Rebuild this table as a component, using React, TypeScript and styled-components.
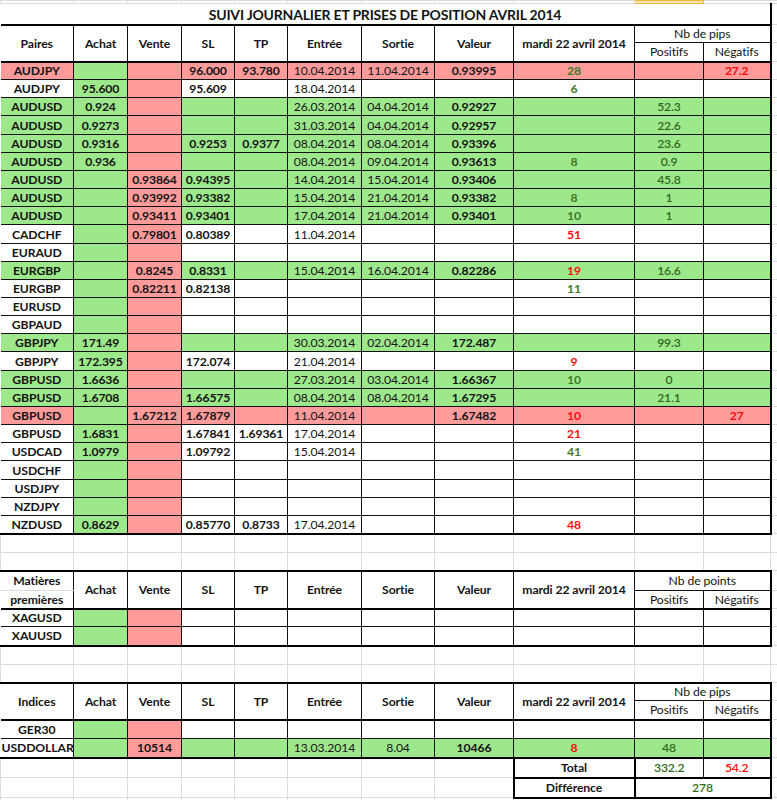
import * as React from 'react';
import styled, { createGlobalStyle } from 'styled-components';

const GlobalStyle = createGlobalStyle`
  html, body {
    margin: 0;
    padding: 0;
    background: #fff;
    overflow: hidden;
  }
`;

// widths of the spreadsheet columns, the last one is the empty column cut by the window
const COLS = [73, 54, 54, 53, 53, 74, 73, 79, 121, 69, 67, 7];

type Fill = 'g' | 'r' | 'w' | 'sel';
type Ink = 'k' | 'g' | 'pos' | 'r';
type Edge = 'none' | 'grid' | 'line' | 'thick';

const FILLS: Record<Fill, string> = {
    g: '#9ee88c',
    r: '#ff9b9b',
    w: '#ffffff',
    sel: '#fde6ad',
};

const INKS: Record<Ink, string> = {
    k: '#141414',
    g: '#437a27',
    pos: '#2f6a20',
    r: '#ff0d0d',
};

const edge = (e: Edge) => {
    if (e === 'none') return 'none';
    if (e === 'grid') return '1px solid #dcdcdc';
    if (e === 'line') return '1px solid #111';
    return '2px solid #000';
};

const Sheet = styled.table`
    border-collapse: collapse;
    table-layout: fixed;
    width: 777px;
    font-family: Lato, 'Liberation Sans', sans-serif;
    font-size: 12.2px;
    letter-spacing: -0.1px;
    color: #141414;
`;

const Row = styled.tr<{ $h: number }>`
    height: ${p => p.$h}px;
`;

const Cell = styled.td<{
    $fill?: Fill;
    $ink?: Ink;
    $weight?: number;
    $t?: Edge;
    $r?: Edge;
    $b?: Edge;
    $l?: Edge;
}>`
    padding: 0 1px;
    line-height: 15px;
    text-align: center;
    vertical-align: middle;
    white-space: nowrap;
    overflow: visible;
    background: ${p => FILLS[p.$fill || 'w']};
    color: ${p => INKS[p.$ink || 'k']};
    font-weight: ${p => p.$weight || 400};
    border-top: ${p => edge(p.$t || 'line')};
    border-right: ${p => edge(p.$r || 'line')};
    border-bottom: ${p => edge(p.$b || 'line')};
    border-left: ${p => edge(p.$l || 'line')};
`;

const Title = styled(Cell)`
    font-size: 14px;
    letter-spacing: -0.2px;
    padding-top: 1px;
`;

const Blank = styled.td<{ $fill?: Fill }>`
    padding: 0;
    background: ${p => FILLS[p.$fill || 'w']};
    border: 1px solid ${p => (p.$fill === 'sel' ? '#f1b53c' : '#dcdcdc')};
`;

interface Trade {
    fill: Fill;
    pair: string;
    achat?: string;
    vente?: string;
    sl?: string;
    tp?: string;
    entree?: string;
    sortie?: string;
    valeur?: string;
    jour?: string;
    tone?: 'g' | 'r';
    pos?: string;
    neg?: string;
    plainLabel?: boolean;
}

const pairs: Trade[] = [
    { fill: 'r', pair: 'AUDJPY', sl: '96.000', tp: '93.780', entree: '10.04.2014', sortie: '11.04.2014', valeur: '0.93995', jour: '28', tone: 'g', neg: '27.2' },
    { fill: 'w', pair: 'AUDJPY', achat: '95.600', sl: '95.609', entree: '18.04.2014', jour: '6', tone: 'g' },
    { fill: 'g', pair: 'AUDUSD', achat: '0.924', entree: '26.03.2014', sortie: '04.04.2014', valeur: '0.92927', pos: '52.3' },
    { fill: 'g', pair: 'AUDUSD', achat: '0.9273', entree: '31.03.2014', sortie: '04.04.2014', valeur: '0.92957', pos: '22.6' },
    { fill: 'g', pair: 'AUDUSD', achat: '0.9316', sl: '0.9253', tp: '0.9377', entree: '08.04.2014', sortie: '08.04.2014', valeur: '0.93396', pos: '23.6' },
    { fill: 'g', pair: 'AUDUSD', achat: '0.936', entree: '08.04.2014', sortie: '09.04.2014', valeur: '0.93613', jour: '8', tone: 'g', pos: '0.9' },
    { fill: 'g', pair: 'AUDUSD', vente: '0.93864', sl: '0.94395', entree: '14.04.2014', sortie: '15.04.2014', valeur: '0.93406', pos: '45.8' },
    { fill: 'g', pair: 'AUDUSD', vente: '0.93992', sl: '0.93382', entree: '15.04.2014', sortie: '21.04.2014', valeur: '0.93382', jour: '8', tone: 'g', pos: '1' },
    { fill: 'g', pair: 'AUDUSD', vente: '0.93411', sl: '0.93401', entree: '17.04.2014', sortie: '21.04.2014', valeur: '0.93401', jour: '10', tone: 'g', pos: '1' },
    { fill: 'w', pair: 'CADCHF', vente: '0.79801', sl: '0.80389', entree: '11.04.2014', jour: '51', tone: 'r' },
    { fill: 'w', pair: 'EURAUD' },
    { fill: 'g', pair: 'EURGBP', vente: '0.8245', sl: '0.8331', entree: '15.04.2014', sortie: '16.04.2014', valeur: '0.82286', jour: '19', tone: 'r', pos: '16.6' },
    { fill: 'w', pair: 'EURGBP', vente: '0.82211', sl: '0.82138', jour: '11', tone: 'g' },
    { fill: 'w', pair: 'EURUSD' },
    { fill: 'w', pair: 'GBPAUD' },
    { fill: 'g', pair: 'GBPJPY', achat: '171.49', entree: '30.03.2014', sortie: '02.04.2014', valeur: '172.487', pos: '99.3' },
    { fill: 'w', pair: 'GBPJPY', achat: '172.395', sl: '172.074', entree: '21.04.2014', jour: '9', tone: 'r' },
    { fill: 'g', pair: 'GBPUSD', achat: '1.6636', entree: '27.03.2014', sortie: '03.04.2014', valeur: '1.66367', jour: '10', tone: 'g', pos: '0' },
    { fill: 'g', pair: 'GBPUSD', achat: '1.6708', sl: '1.66575', entree: '08.04.2014', sortie: '08.04.2014', valeur: '1.67295', pos: '21.1' },
    { fill: 'r', pair: 'GBPUSD', vente: '1.67212', sl: '1.67879', entree: '11.04.2014', valeur: '1.67482', jour: '10', tone: 'r', neg: '27' },
    { fill: 'w', pair: 'GBPUSD', achat: '1.6831', sl: '1.67841', tp: '1.69361', entree: '17.04.2014', jour: '21', tone: 'r' },
    { fill: 'w', pair: 'USDCAD', achat: '1.0979', sl: '1.09792', entree: '15.04.2014', jour: '41', tone: 'g' },
    { fill: 'w', pair: 'USDCHF' },
    { fill: 'w', pair: 'USDJPY' },
    { fill: 'w', pair: 'NZDJPY' },
    { fill: 'w', pair: 'NZDUSD', achat: '0.8629', sl: '0.85770', tp: '0.8733', entree: '17.04.2014', jour: '48', tone: 'r' },
];

const metals: Trade[] = [
    { fill: 'w', pair: 'XAGUSD' },
    { fill: 'w', pair: 'XAUUSD' },
];

const indices: Trade[] = [
    { fill: 'w', pair: 'GER30' },
    { fill: 'g', pair: 'USDDOLLAR', vente: '10514', entree: '13.03.2014', sortie: '8.04', valeur: '10466', jour: '8', tone: 'r', pos: '48', plainLabel: true },
];

const DAY = 'mardi 22 avril 2014';

const BlankRow = ({ h, sel }: { h: number; sel?: boolean }) => (
    <Row $h={h}>
        {COLS.map((_, i) => (
            <Blank key={i} $fill={sel && i === 9 ? 'sel' : 'w'} />
        ))}
    </Row>
);

const HeadRows = ({ label, label2, unit, hs }: { label: string; label2?: string; unit: string; hs: [number, number] }) => {
    const heads = ['Achat', 'Vente', 'SL', 'TP', 'Entrée', 'Sortie', 'Valeur', DAY];
    return (
        <>
            <Row $h={hs[0]}>
                {label2 ? (
                    <Cell $weight={700} $l="none" $t="thick" $b="grid">{label}</Cell>
                ) : (
                    <Cell $weight={700} $l="none" $t="thick" $b="thick" rowSpan={2}>{label}</Cell>
                )}
                {heads.map(h => (
                    <Cell key={h} $weight={700} $t="thick" $b="thick" rowSpan={2}>{h}</Cell>
                ))}
                <Cell colSpan={2} $t="thick" $r="thick">{unit}</Cell>
                <Blank />
            </Row>
            <Row $h={hs[1]}>
                {label2 && <Cell $weight={700} $l="none" $t="grid" $b="thick">{label2}</Cell>}
                <Cell $b="thick">Positifs</Cell>
                <Cell $b="thick" $r="thick">Négatifs</Cell>
                <Blank />
            </Row>
        </>
    );
};

const TradeRow = ({ t, h, last }: { t: Trade; h: number; last: boolean }) => {
    const b: Edge = last ? 'thick' : 'line';
    return (
        <Row $h={h}>
            <Cell $weight={700} $fill={t.plainLabel ? 'w' : t.fill} $l="none" $b={b}>{t.pair}</Cell>
            <Cell $weight={700} $fill="g" $b={b}>{t.achat}</Cell>
            <Cell $weight={700} $fill="r" $b={b}>{t.vente}</Cell>
            <Cell $weight={700} $fill={t.fill} $b={b}>{t.sl}</Cell>
            <Cell $weight={700} $fill={t.fill} $b={b}>{t.tp}</Cell>
            <Cell $fill={t.fill} $b={b}>{t.entree}</Cell>
            <Cell $fill={t.fill} $b={b}>{t.sortie}</Cell>
            <Cell $weight={700} $fill={t.fill} $b={b}>{t.valeur}</Cell>
            <Cell $weight={700} $fill={t.fill} $ink={t.tone || 'g'} $b={b}>{t.jour}</Cell>
            <Cell $weight={600} $fill={t.fill} $ink="pos" $b={b}>{t.pos}</Cell>
            <Cell $weight={700} $fill={t.fill} $ink="r" $b={b} $r="thick">{t.neg}</Cell>
            <Blank />
        </Row>
    );
};

// pixel pitch of the 26 pair rows: 61px to 533px on the sheet
const pairHeights = pairs.map((_, i) => Math.round(61 + ((i + 1) * 472) / 26) - Math.round(61 + (i * 472) / 26));

const GridRun = ({ n }: { n: number }) => (
    <>
        {Array.from({ length: n }).map((_, i) => (
            <Blank key={i} />
        ))}
    </>
);

export default function App() {
    return (
        <>
            <GlobalStyle />
            <Sheet>
                <colgroup>
                    {COLS.map((w, i) => (
                        <col key={i} style={{ width: w }} />
                    ))}
                </colgroup>
                <tbody>
                    <BlankRow h={3} sel />
                    <Row $h={21}>
                        <Title colSpan={11} $weight={700} $l="none" $t="grid" $b="thick" $r="thick">
                            SUIVI JOURNALIER ET PRISES DE POSITION AVRIL 2014
                        </Title>
                        <Blank />
                    </Row>
                    <HeadRows label="Paires" unit="Nb de pips" hs={[18, 19]} />
                    {pairs.map((t, i) => (
                        <TradeRow key={i} t={t} h={pairHeights[i]} last={i === pairs.length - 1} />
                    ))}
                    <BlankRow h={19} />
                    <BlankRow h={18} />
                    <HeadRows label="Matières" label2="premières" unit="Nb de points" hs={[20, 18]} />
                    {metals.map((t, i) => (
                        <TradeRow key={i} t={t} h={i === 0 ? 18 : 19} last={i === metals.length - 1} />
                    ))}
                    <BlankRow h={19} />
                    <BlankRow h={18} />
                    <HeadRows label="Indices" unit="Nb de pips" hs={[18, 19]} />
                    {indices.map((t, i) => (
                        <TradeRow key={i} t={t} h={19} last={i === indices.length - 1} />
                    ))}
                    <Row $h={20}>
                        <GridRun n={8} />
                        <Cell $weight={700} $l="thick" $b="thick" $r="thick">Total</Cell>
                        <Cell $weight={600} $ink="pos" $b="thick">332.2</Cell>
                        <Cell $weight={600} $ink="r" $b="thick" $r="thick">54.2</Cell>
                        <Blank />
                    </Row>
                    <Row $h={20}>
                        <GridRun n={8} />
                        <Cell $weight={700} $l="thick" $b="thick" $r="thick">Différence</Cell>
                        <Cell colSpan={2} $weight={600} $ink="pos" $b="thick" $r="thick">278</Cell>
                        <Blank />
                    </Row>
                    <BlankRow h={3} />
                </tbody>
            </Sheet>
        </>
    );
}
